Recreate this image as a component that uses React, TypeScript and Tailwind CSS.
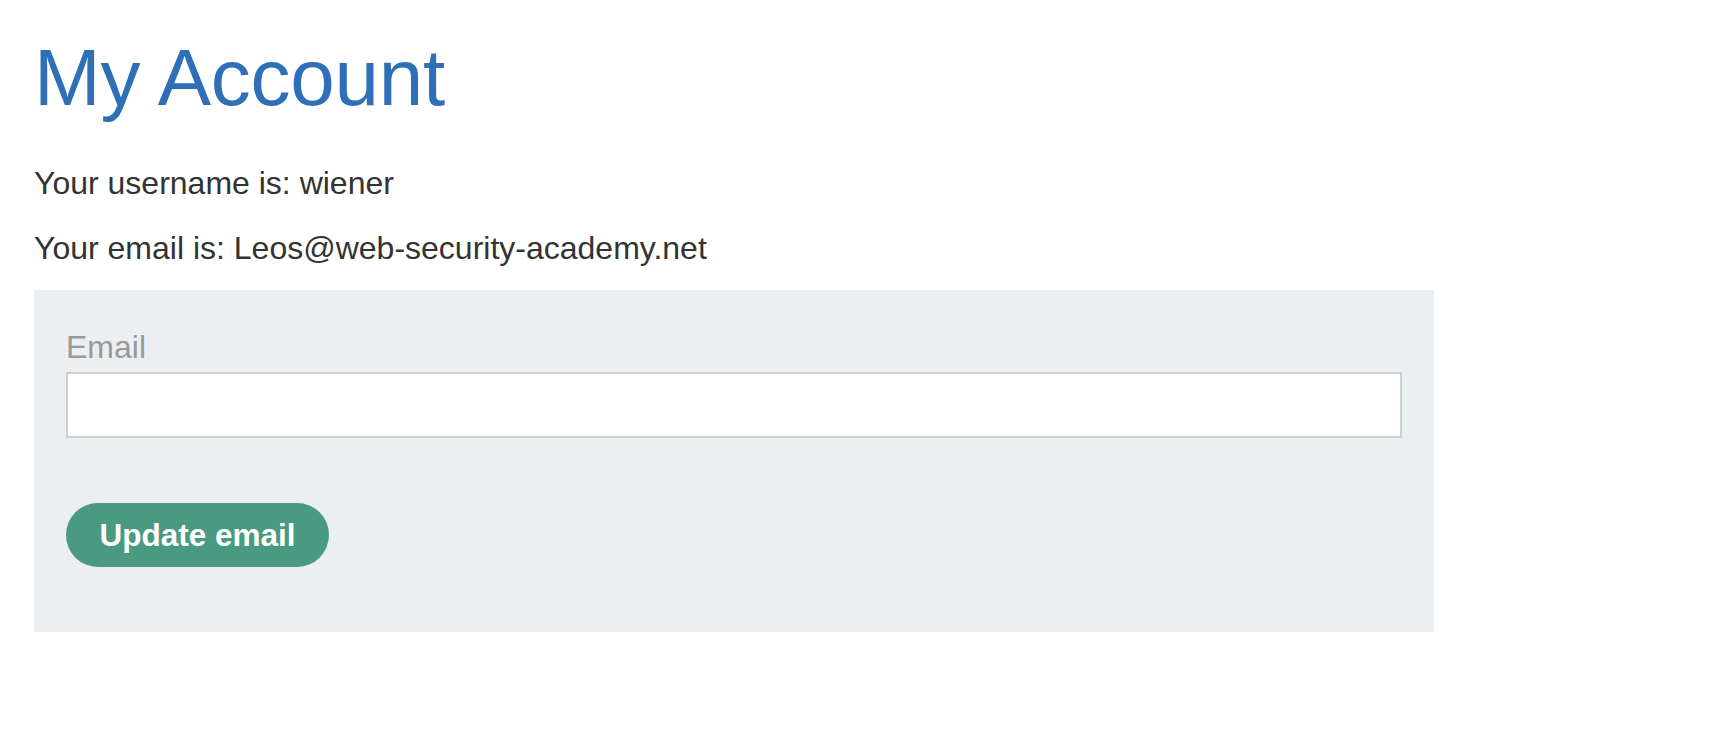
import React from "react";

export default function App() {
  return (
    <div
      className="min-h-screen bg-white pl-[34px] pt-[38px]"
      style={{ fontFamily: '"Liberation Sans", Arial, Helvetica, sans-serif' }}
    >
      <h1 className="text-[80px] leading-[80px] text-[#2f6fb8] font-normal tracking-[-0.25px]">
        My Account
      </h1>
      <p className="mt-[48px] text-[32px] leading-[35px] text-[#333332]">
        Your username is: wiener
      </p>
      <p className="mt-[30px] text-[32px] leading-[35px] text-[#333332]">
        Your email is: Leos@web-security-academy.net
      </p>
      <form
        className="mt-[24px] w-[1400px] h-[342px] bg-[#ebeff2] px-[32px] pt-[40px] flex flex-col"
        onSubmit={(e) => e.preventDefault()}
      >
        <label className="text-[32px] leading-[35px] text-[#999999]">Email</label>
        <input
          type="email"
          className="mt-[7px] h-[66px] w-[1336px] bg-white border-2 border-[#cbd0d1] outline-none"
        />
        <button
          type="submit"
          className="mt-[65px] h-[64px] w-[263px] rounded-full bg-[#4a9a82] text-white font-bold text-[31.5px] leading-[35px] flex items-center justify-center"
        >
          Update email
        </button>
      </form>
    </div>
  );
}
